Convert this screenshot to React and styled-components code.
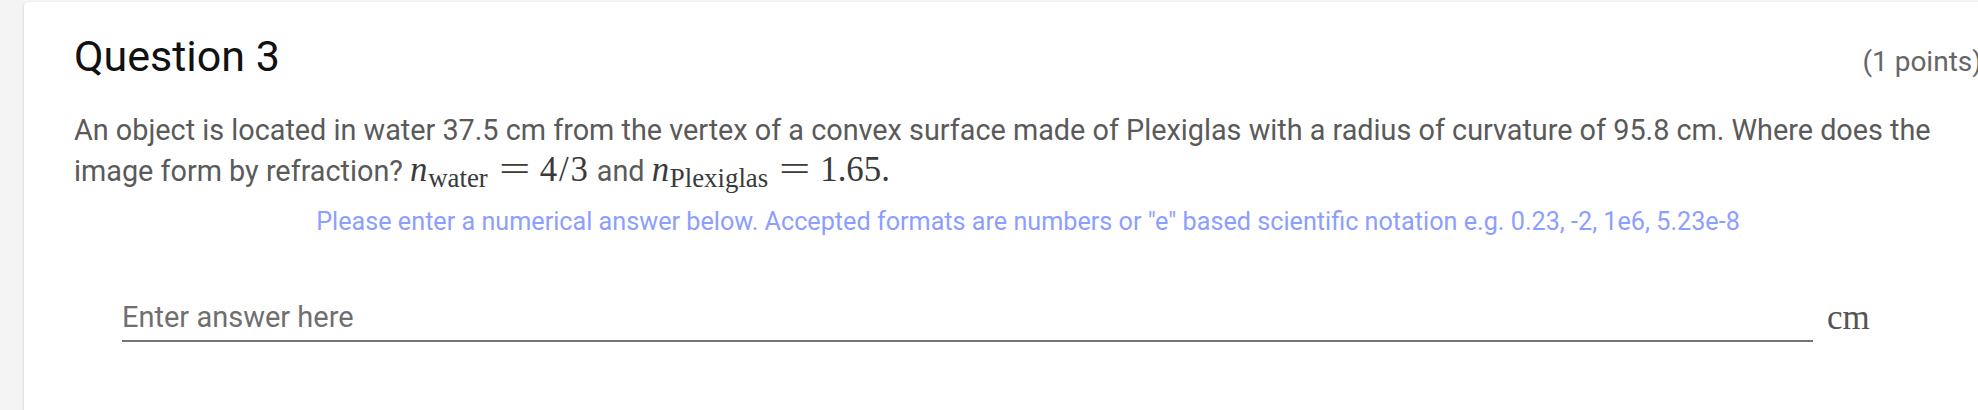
import React from "react";
import styled, { createGlobalStyle } from "styled-components";

const Global = createGlobalStyle`
  html, body { margin: 0; padding: 0; }
  body {
    background: #f4f4f4;
    font-family: Roboto, "Liberation Sans", sans-serif;
    overflow: hidden;
    width: 1978px;
    height: 410px;
  }
`;

const Page = styled.div`
  padding: 2px 0 0 24px;
  height: 410px;
  box-sizing: border-box;
`;

const Card = styled.section`
  width: 2010px;
  height: 460px;
  background: #fff;
  border-radius: 4px;
  box-shadow: 0 1px 3px rgba(0, 0, 0, 0.12), 0 1px 2px rgba(0, 0, 0, 0.1);
  padding: 26px 0 0 50px;
  box-sizing: border-box;
`;

const Inner = styled.div`
  width: 1908px;
`;

const Header = styled.header`
  display: flex;
  justify-content: space-between;
  align-items: baseline;
`;

const Title = styled.h2`
  margin: 0;
  font-size: 43px;
  font-weight: 400;
  line-height: 56px;
  color: #111;
`;

const Points = styled.span`
  font-size: 28px;
  color: #666;
`;

const Prompt = styled.p`
  margin: 26px 0 0;
  font-size: 28.8px;
  line-height: 41px;
  color: #5a5a5a;
`;

const M = styled.span`
  font-family: "Liberation Serif", "DejaVu Serif", serif;
  font-size: 1.21em;
  line-height: 1;
  color: #3a3a3a;
  white-space: nowrap;
`;

const Var = styled.i`
  font-style: italic;
  margin-right: 0.02em;
`;

const Sub = styled.sub`
  font-size: 0.77em;
  vertical-align: -0.22em;
  line-height: 0;
`;

const Op = styled.span`
  display: inline-block;
  transform: scaleX(1.6);
  margin: 0 0.45em 0 0.48em;
`;

const Num = styled.span`
  letter-spacing: 0.05em;
`;

const Hint = styled.p`
  margin: 14px 0 0;
  text-align: center;
  font-size: 25.2px;
  line-height: 32px;
  color: #8c9eff;
`;

const AnswerRow = styled.div`
  display: flex;
  align-items: flex-end;
  margin: 60px 0 0 48px;
  gap: 14px;
`;

const Input = styled.input`
  width: 1691px;
  border: 0;
  border-bottom: 2px solid #757575;
  outline: none;
  background: transparent;
  font-family: Roboto, "Liberation Sans", sans-serif;
  font-size: 29px;
  padding: 0 0 6px;
  color: #333;
  &::placeholder { color: #6f6f6f; opacity: 1; }
`;

const Unit = styled.span`
  font-family: "Liberation Serif", "DejaVu Serif", serif;
  font-size: 35px;
  color: #555;
  padding-bottom: 4px;
`;

export default function App() {
  return (
    <>
      <Global />
      <Page>
        <Card>
          <Inner>
            <Header>
              <Title>Question 3</Title>
              <Points>(1 points)</Points>
            </Header>
            <Prompt>
              An object is located in water 37.5 cm from the vertex of a convex surface made of
              Plexiglas with a radius of curvature of 95.8 cm. Where does the image form by
              refraction?{" "}
              <M>
                <Var>n</Var>
                <Sub>water</Sub>
                <Op>=</Op>
                <Num>4/3</Num>
              </M>{" "}
              and{" "}
              <M>
                <Var>n</Var>
                <Sub>Plexiglas</Sub>
                <Op>=</Op>1.65.
              </M>
            </Prompt>
            <Hint>
              Please enter a numerical answer below. Accepted formats are numbers or "e" based
              scientific notation e.g. 0.23, -2, 1e6, 5.23e-8
            </Hint>
            <AnswerRow>
              <Input placeholder="Enter answer here" />
              <Unit>cm</Unit>
            </AnswerRow>
          </Inner>
        </Card>
      </Page>
    </>
  );
}
